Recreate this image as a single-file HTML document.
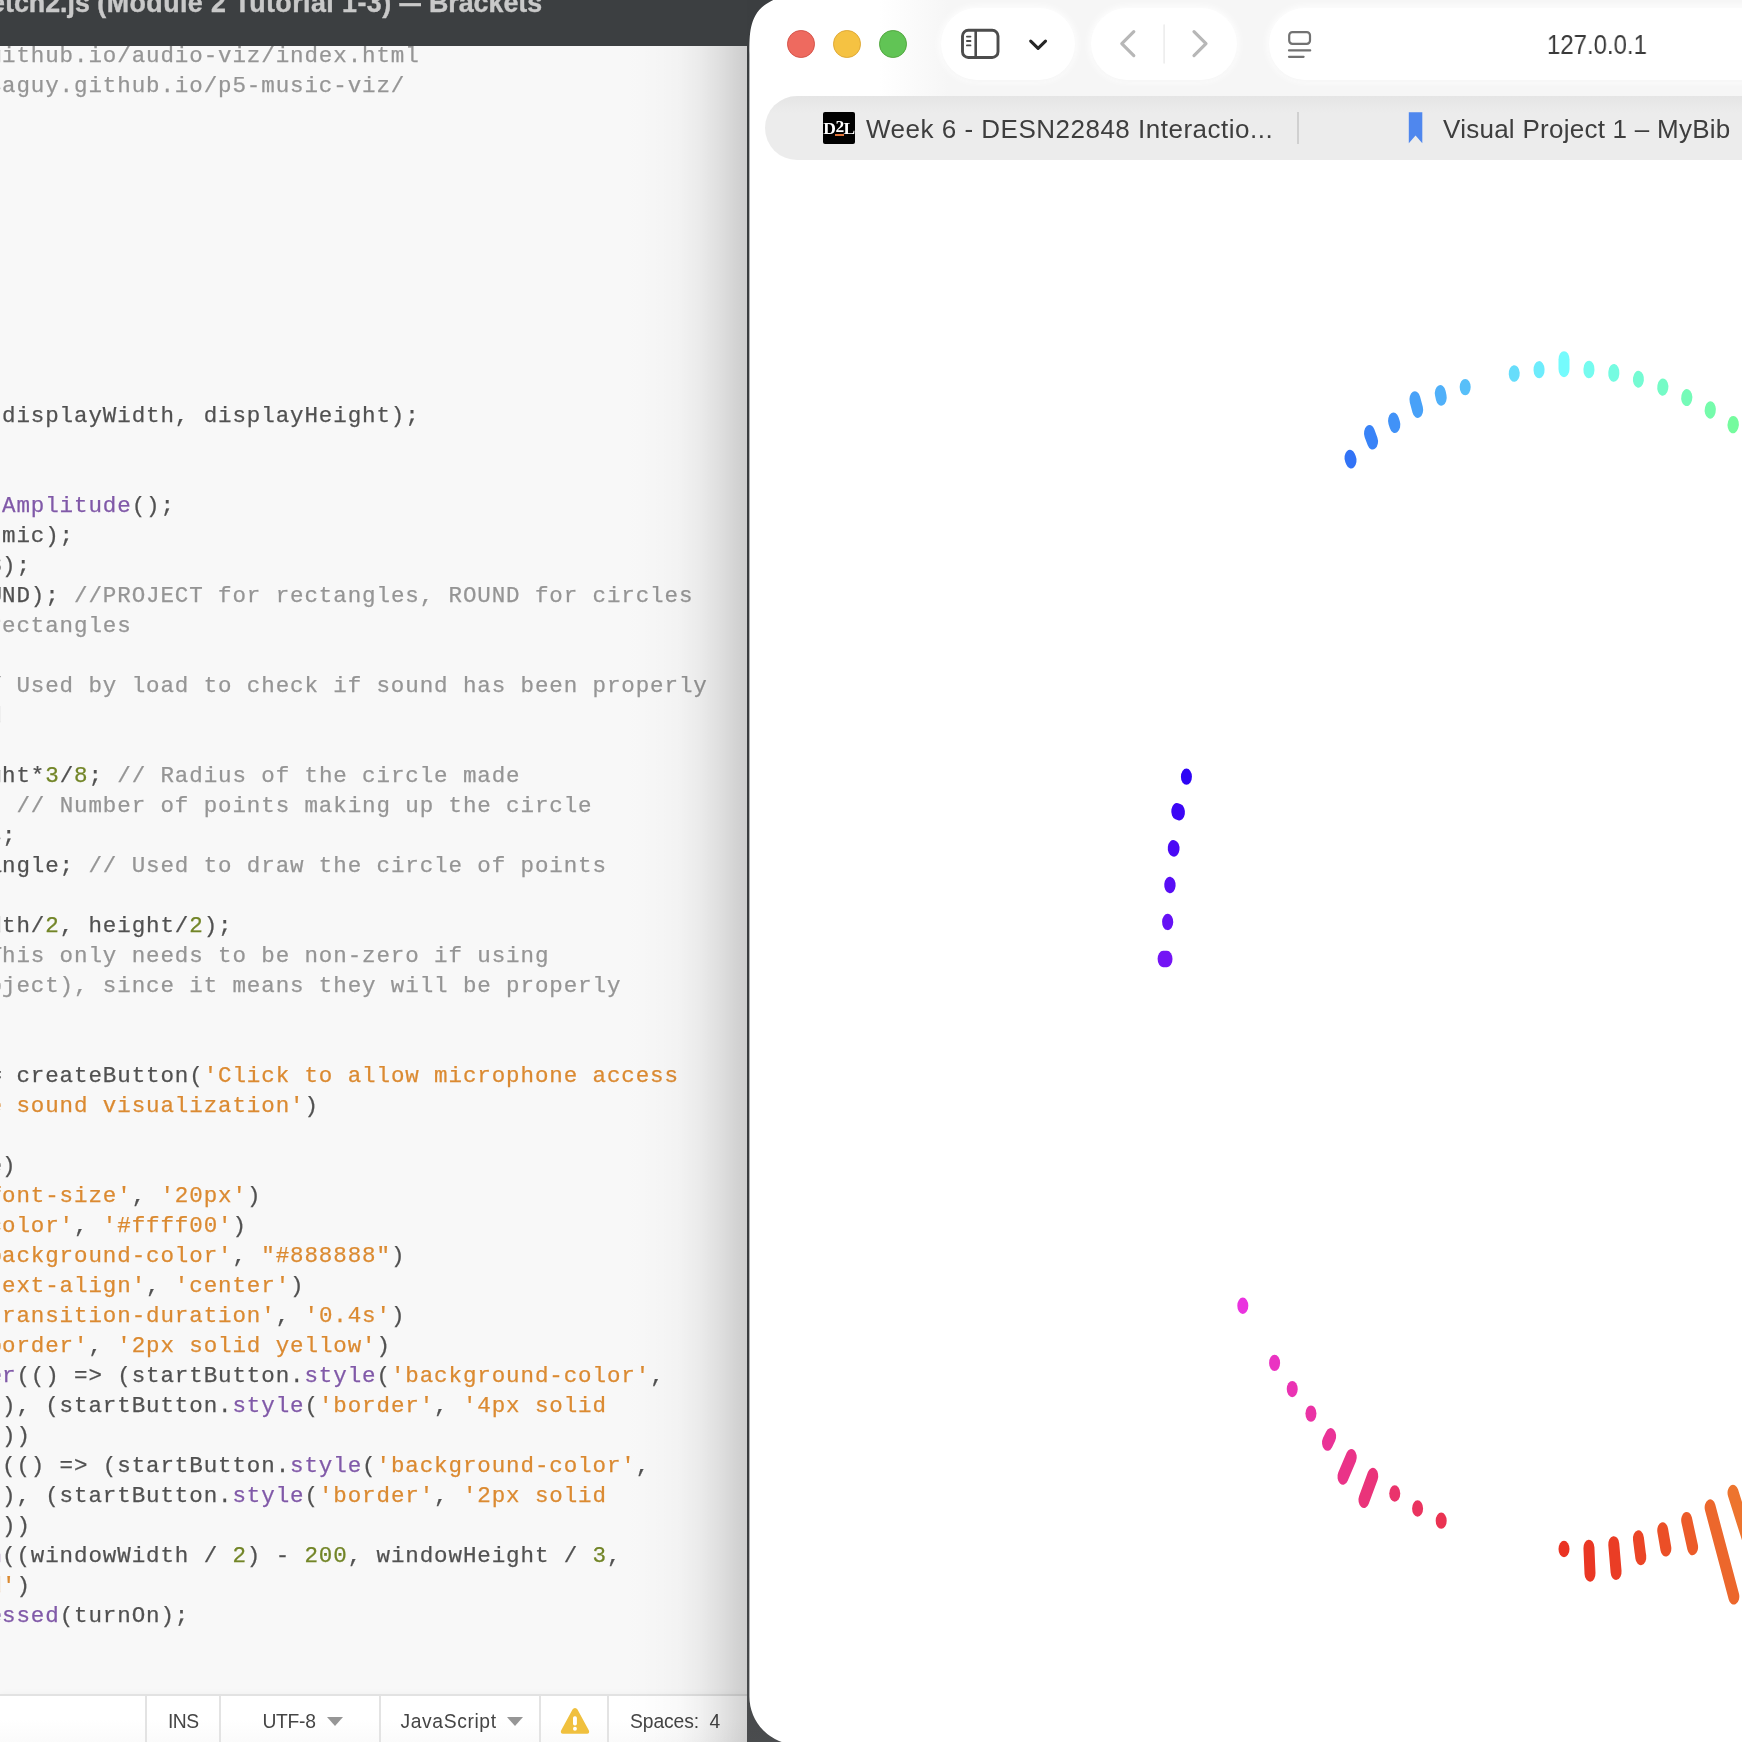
<!DOCTYPE html>
<html lang="en">
<head>
<meta charset="utf-8">
<title>sketch2.js (Module 2 Tutorial 1-3) — Brackets</title>
<style>
html,body{margin:0;padding:0}
body{width:1742px;height:1742px;overflow:hidden;position:relative;background:linear-gradient(to bottom,#3b3e40 0,#3a3c3e 1500px,#4a4c4e 1742px);
  font-family:"Liberation Sans",sans-serif}
.abs{position:absolute}
#ta{letter-spacing:0.45px}#td{display:inline-block;width:22px;overflow:hidden;vertical-align:top}
/* ---------------- Brackets window ---------------- */
#brackets{will-change:transform;position:absolute;left:0;top:0;width:747px;height:1742px;overflow:hidden;background:#f8f8f8}
#titlebar{position:absolute;left:0;top:0;width:100%;height:45.5px;background:#3c3f41}
#title{position:absolute;left:-24.8px;top:-17px;font-weight:bold;font-size:26.8px;-webkit-text-stroke:0.4px #c9c9c9;line-height:40px;color:#c9c9c9;white-space:pre;letter-spacing:0px}
#editor{position:absolute;left:0;top:45.5px;width:100%;height:1649px;background:#f8f8f8}
.ln{position:absolute;left:-12.4px;height:30px;line-height:30px;font-family:"Liberation Mono",monospace;font-size:22.5px;letter-spacing:0.9px;white-space:pre;color:#535353;-webkit-text-stroke:0.25px currentColor}
.p{position:relative;left:0.8px}
.t{color:#515151}.c{color:#959595}.s{color:#db8a31}.n{color:#728527}.d{color:#8059a8}
#status{position:absolute;left:0;top:1693.6px;width:100%;height:49px;background:linear-gradient(to bottom,#fff 0,#fff 24px,#fafafa 48px);border-top:2.2px solid #e2e2e2;box-sizing:border-box;box-shadow:0 -2px 5px rgba(0,0,0,0.025)}
.sep{position:absolute;top:0;width:2px;height:48px;background:#e3e3e3}
.st{position:absolute;top:11.3px;font-size:19.3px;line-height:30px;color:#454545;white-space:pre}
.tri{position:absolute;top:21.3px;width:0;height:0;border-left:8.3px solid transparent;border-right:8.3px solid transparent;border-top:9.8px solid #969696}
#shade{position:absolute;left:620px;top:45.5px;width:127px;height:1700px;
  background:linear-gradient(to right,rgba(0,0,0,0.000) 0.0px,rgba(0,0,0,0.004) 20.0px,rgba(0,0,0,0.012) 40.0px,rgba(0,0,0,0.024) 60.0px,rgba(0,0,0,0.056) 80.0px,rgba(0,0,0,0.100) 100.0px,rgba(0,0,0,0.145) 115.0px,rgba(0,0,0,0.178) 127.0px)}
/* ---------------- Safari window ---------------- */
#safari{position:absolute;left:749.4px;top:-8px;width:1100px;height:1760px;background:#fff;overflow:hidden;clip-path:path('M56.4 0C0.1 6.2 0 31.4 0 62L0 1704.6A48 48 0 0 0 48 1752.6L1100 1752.6L1100 0Z')}
#tbbg{position:absolute;left:130px;top:0;width:1000px;height:106px;background:linear-gradient(to right,rgba(246,246,246,0) 0,#f6f6f6 70px)}
.pill{position:absolute;top:8px;height:72px;border-radius:36px;background:#fff;box-shadow:0 1.5px 3px rgba(0,0,0,0.025),0 0 7px 2px rgba(255,255,255,0.9)}
.tl{position:absolute;top:30px;width:27.6px;height:27.6px;border-radius:50%;box-sizing:border-box}
#tabbar{position:absolute;left:765px;top:96px;width:1100px;height:64px;border-radius:32px;background:linear-gradient(to bottom,#e5e5e5 0,#ececec 17px)}
.tabtxt{will-change:transform;position:absolute;top:110.7px;font-size:26px;line-height:36px;color:#3e3e3e;white-space:pre}
#url{will-change:transform;position:absolute;left:1547.3px;top:26.6px;font-size:27px;transform:scaleX(0.888);transform-origin:0 0;line-height:36px;color:#3a3a3a;white-space:pre}
svg.viz{position:absolute;left:0;top:0}
svg.ico{position:absolute;left:0;top:0;overflow:visible}
</style>
</head>
<body>

<!-- ======================= Brackets editor (left) ======================= -->
<div id="brackets">
  <div id="editor"></div>
<div class="ln" style="top:40.6px"><span class="c p">g</span><span class="c">ithub.io/audio-viz/index.html</span></div>
<div class="ln" style="top:70.6px"><span class="c p">s</span><span class="c">aguy.github.io/p5-music-viz/</span></div>
<div class="ln" style="top:400.6px"><span class="t p">(</span><span class="t">displayWidth, displayHeight);</span></div>
<div class="ln" style="top:490.6px"><span class="t p">.</span><span class="d">Amplitude</span><span class="t">();</span></div>
<div class="ln" style="top:520.6px"><span class="t p">(</span><span class="t">mic);</span></div>
<div class="ln" style="top:550.6px"><span class="t p">8</span><span class="t">);</span></div>
<div class="ln" style="top:580.6px"><span class="t p">U</span><span class="t">ND); </span><span class="c">//PROJECT for rectangles, ROUND for circles</span></div>
<div class="ln" style="top:610.6px"><span class="c p">r</span><span class="c">ectangles</span></div>
<div class="ln" style="top:670.6px"><span class="c p">/</span><span class="c"> Used by load to check if sound has been properly</span></div>
<div class="ln" style="top:700.6px"><span class="c p">d</span></div>
<div class="ln" style="top:760.6px"><span class="t p">g</span><span class="t">ht*</span><span class="n">3</span><span class="t">/</span><span class="n">8</span><span class="t">; </span><span class="c">// Radius of the circle made</span></div>
<div class="ln" style="top:790.6px"><span class="t p">;</span><span class="t"> </span><span class="c">// Number of points making up the circle</span></div>
<div class="ln" style="top:820.6px"><span class="t p">s</span><span class="t">;</span></div>
<div class="ln" style="top:850.6px"><span class="t p">a</span><span class="t">ngle; </span><span class="c">// Used to draw the circle of points</span></div>
<div class="ln" style="top:910.6px"><span class="t p">d</span><span class="t">th/</span><span class="n">2</span><span class="t">, height/</span><span class="n">2</span><span class="t">);</span></div>
<div class="ln" style="top:940.6px"><span class="c p">T</span><span class="c">his only needs to be non-zero if using</span></div>
<div class="ln" style="top:970.6px"><span class="c p">b</span><span class="c">ject), since it means they will be properly</span></div>
<div class="ln" style="top:1060.6px"><span class="t p">=</span><span class="t"> createButton(</span><span class="s">'Click to allow microphone access</span></div>
<div class="ln" style="top:1090.6px"><span class="s p">e</span><span class="s"> sound visualization'</span><span class="t">)</span></div>
<div class="ln" style="top:1150.6px"><span class="t p">e</span><span class="t">)</span></div>
<div class="ln" style="top:1180.6px"><span class="s p">f</span><span class="s">ont-size'</span><span class="t">, </span><span class="s">'20px'</span><span class="t">)</span></div>
<div class="ln" style="top:1210.6px"><span class="s p">c</span><span class="s">olor'</span><span class="t">, </span><span class="s">'#ffff00'</span><span class="t">)</span></div>
<div class="ln" style="top:1240.6px"><span class="s p">b</span><span class="s">ackground-color'</span><span class="t">, </span><span class="s">"#888888"</span><span class="t">)</span></div>
<div class="ln" style="top:1270.6px"><span class="s p">t</span><span class="s">ext-align'</span><span class="t">, </span><span class="s">'center'</span><span class="t">)</span></div>
<div class="ln" style="top:1300.6px"><span class="s p">t</span><span class="s">ransition-duration'</span><span class="t">, </span><span class="s">'0.4s'</span><span class="t">)</span></div>
<div class="ln" style="top:1330.6px"><span class="s p">b</span><span class="s">order'</span><span class="t">, </span><span class="s">'2px solid yellow'</span><span class="t">)</span></div>
<div class="ln" style="top:1360.6px"><span class="d p">e</span><span class="d">r</span><span class="t">(() =&gt; (startButton.</span><span class="d">style</span><span class="t">(</span><span class="s">'background-color'</span><span class="t">,</span></div>
<div class="ln" style="top:1390.6px"><span class="s p">'</span><span class="t">), (startButton.</span><span class="d">style</span><span class="t">(</span><span class="s">'border'</span><span class="t">, </span><span class="s">'4px solid</span></div>
<div class="ln" style="top:1420.6px"><span class="s p">'</span><span class="t">))</span></div>
<div class="ln" style="top:1450.6px"><span class="d p">t</span><span class="t">(() =&gt; (startButton.</span><span class="d">style</span><span class="t">(</span><span class="s">'background-color'</span><span class="t">,</span></div>
<div class="ln" style="top:1480.6px"><span class="s p">'</span><span class="t">), (startButton.</span><span class="d">style</span><span class="t">(</span><span class="s">'border'</span><span class="t">, </span><span class="s">'2px solid</span></div>
<div class="ln" style="top:1510.6px"><span class="s p">'</span><span class="t">))</span></div>
<div class="ln" style="top:1540.6px"><span class="d p">n</span><span class="t">((windowWidth / </span><span class="n">2</span><span class="t">) - </span><span class="n">200</span><span class="t">, windowHeight / </span><span class="n">3</span><span class="t">,</span></div>
<div class="ln" style="top:1570.6px"><span class="s p">d</span><span class="s">'</span><span class="t">)</span></div>
<div class="ln" style="top:1600.6px"><span class="d p">e</span><span class="d">ssed</span><span class="t">(turnOn);</span></div>
  <div id="titlebar"><div id="title"><span id="t0">ketch2.js </span><span id="ta">(Module 2 Tutorial 1-3) </span><span id="td">—</span><span id="tc"> Brackets</span></div></div>
  <div id="status">
    <div class="sep" style="left:145px"></div>
    <div class="sep" style="left:219px"></div>
    <div class="sep" style="left:379px"></div>
    <div class="sep" style="left:539px"></div>
    <div class="sep" style="left:606.5px"></div>
    <div class="st" style="left:168px;letter-spacing:-0.49px">INS</div>
    <div class="st" style="left:262.4px;letter-spacing:-0.26px">UTF-8</div>
    <div class="tri" style="left:327.2px"></div>
    <div class="st" style="left:400.4px;letter-spacing:0.63px">JavaScript</div>
    <div class="tri" style="left:507.1px"></div>
    <div class="st" style="left:630px;letter-spacing:-0.09px">Spaces:  4</div>
    <svg class="abs" style="left:559px;top:10.2px" width="32" height="32" viewBox="0 0 32 32">
      <path d="M16 1.9 Q17.7 1.9 18.5 3.4 L29.9 24.6 Q31 27.6 28 27.8 L4 27.8 Q1 27.6 2.1 24.6 L13.5 3.4 Q14.3 1.9 16 1.9Z" fill="#f0c03e"/>
      <rect x="14" y="10.2" width="3.9" height="9.3" rx="1.7" fill="#fff"/>
      <circle cx="15.95" cy="22.75" r="1.95" fill="#fff"/>
    </svg>
  </div>
  <div id="shade"></div>
</div>

<!-- ======================= Safari window (right) ======================= -->
<div id="safari"><div id="tbbg"></div></div>

<div class="tl" style="left:787.1px;background:#ee6a5f;border:1px solid #d5544a"></div>
<div class="tl" style="left:833.1px;background:#f5c242;border:1px solid #dfa936"></div>
<div class="tl" style="left:879.3px;background:#61c455;border:1px solid #52a73f"></div>

<div class="pill" style="left:941px;width:134px"></div>
<div class="pill" style="left:1091px;width:146px"></div>
<div class="pill" style="left:1269px;width:600px"></div>

<svg class="ico" width="1742" height="170" viewBox="0 0 1742 170" fill="none" stroke-linecap="round" stroke-linejoin="round">
  <!-- sidebar toggle -->
  <rect x="962.5" y="30.3" width="35.5" height="27.2" rx="5.8" stroke="#4c4c4c" stroke-width="2.9"/>
  <line x1="975.7" y1="30.5" x2="975.7" y2="57" stroke="#4c4c4c" stroke-width="2.6"/>
  <path d="M966.9 36.6H970.5M966.9 41H970.5M966.9 45.4H970.5" stroke="#4c4c4c" stroke-width="1.8"/>
  <!-- chevron down -->
  <path d="M1030.7 41.1L1038.1 48.3L1045.5 41.1" stroke="#262626" stroke-width="3.1"/>
  <!-- back / forward -->
  <path d="M1133.8 31.6L1121.8 43.6L1133.8 55.6" stroke="#b7b7b7" stroke-width="3.2"/>
  <line x1="1164.1" y1="25" x2="1164.1" y2="63" stroke="#ebebeb" stroke-width="1.5"/>
  <path d="M1194 31.6L1206 43.6L1194 55.6" stroke="#b7b7b7" stroke-width="3.2"/>
  <!-- page menu icon -->
  <rect x="1289.2" y="32.2" width="20.8" height="11.6" rx="3.2" stroke="#727272" stroke-width="2.2"/>
  <path d="M1289 50.4H1310.2M1289 56.8H1303.6" stroke="#727272" stroke-width="2.2"/>
</svg>
<div id="url">127.0.0.1</div>

<div id="tabbar"></div>
<!-- D2L favicon -->
<div class="abs" style="left:823px;top:112px;width:32px;height:32px;background:#000;overflow:hidden;border-radius:2px;will-change:transform">
  <div class="abs" style="left:0;top:5.1px;width:32px;text-align:center;font-family:'Liberation Serif',serif;font-weight:bold;font-size:17.5px;line-height:22px;color:#fff;letter-spacing:-0.6px">D<span style="position:relative;top:-1.7px">2</span>L</div>
  <div class="abs" style="left:12.1px;top:21.7px;width:9px;height:2.2px;background:#e0753a"></div>
</div>
<div class="tabtxt" style="left:866px;letter-spacing:0.5px">Week 6 - DESN22848 Interactio...</div>
<div class="abs" style="left:1297.3px;top:112px;width:1.6px;height:31.5px;background:#d0d0d0"></div>
<svg class="ico" width="1742" height="170" viewBox="0 0 1742 170">
  <path d="M1408.8 112.2H1422.3V143.3L1415.55 135.6L1408.8 143.3Z" fill="#4f87ee"/>
</svg>
<div class="tabtxt" style="left:1443.2px;letter-spacing:0.26px">Visual Project 1 – MyBib</div>

<!-- ======================= p5 sketch output ======================= -->
<svg class="viz" width="1742" height="1742" viewBox="0 0 1742 1742"><g transform="translate(1564.0,959.0) scale(1,1.4861)" stroke-width="11.0" stroke-linecap="round" fill="none"><line x1="169.03" y1="359.22" x2="200.97" y2="427.08" stroke="#ed742e"/><line x1="146.15" y1="369.12" x2="169.82" y2="428.91" stroke="#ec672c"/><line x1="122.68" y1="377.57" x2="128.58" y2="395.73" stroke="#ec5b29"/><line x1="98.73" y1="384.53" x2="101.84" y2="396.63" stroke="#eb4f27"/><line x1="74.39" y1="389.97" x2="76.77" y2="402.44" stroke="#eb4526"/><line x1="49.76" y1="393.87" x2="52.09" y2="412.32" stroke="#ea3d25"/><line x1="24.93" y1="396.22" x2="26.01" y2="413.48" stroke="#ea3724"/><line x1="-0.00" y1="397.00" x2="-0.00" y2="397.01" stroke="#ea3323"/><line x1="-122.80" y1="377.95" x2="-122.81" y2="377.96" stroke="#ea3352"/><line x1="-146.40" y1="369.77" x2="-146.41" y2="369.78" stroke="#ea335f"/><line x1="-169.25" y1="359.67" x2="-169.25" y2="359.68" stroke="#ea336c"/><line x1="-191.26" y1="347.89" x2="-200.07" y2="363.93" stroke="#ea337a"/><line x1="-212.72" y1="335.20" x2="-221.03" y2="348.29" stroke="#ea3388"/><line x1="-233.35" y1="321.18" x2="-236.47" y2="325.47" stroke="#ea3397"/><line x1="-253.06" y1="305.89" x2="-253.06" y2="305.90" stroke="#ea33a5"/><line x1="-271.77" y1="289.40" x2="-271.77" y2="289.41" stroke="#ea33b3"/><line x1="-289.40" y1="271.77" x2="-289.41" y2="271.77" stroke="#ea33c2"/><line x1="-321.18" y1="233.35" x2="-321.19" y2="233.36" stroke="#ea33df"/><line x1="-397.00" y1="-0.00" x2="-400.90" y2="-0.00" stroke="#7414f5"/><line x1="-396.22" y1="-24.93" x2="-396.42" y2="-24.94" stroke="#6611f5"/><line x1="-393.87" y1="-49.76" x2="-394.27" y2="-49.81" stroke="#580df5"/><line x1="-389.97" y1="-74.39" x2="-390.75" y2="-74.54" stroke="#4a09f5"/><line x1="-384.53" y1="-98.73" x2="-387.24" y2="-99.43" stroke="#3c06f5"/><line x1="-377.57" y1="-122.68" x2="-377.58" y2="-122.68" stroke="#2e04f5"/><line x1="-212.94" y1="-335.54" x2="-214.01" y2="-337.22" stroke="#3273f6"/><line x1="-191.47" y1="-348.29" x2="-194.51" y2="-353.81" stroke="#3983f7"/><line x1="-169.14" y1="-359.44" x2="-170.46" y2="-362.25" stroke="#4192f7"/><line x1="-146.33" y1="-369.59" x2="-149.09" y2="-376.56" stroke="#48a1f8"/><line x1="-122.77" y1="-377.85" x2="-123.68" y2="-380.66" stroke="#50b0f9"/><line x1="-98.80" y1="-384.82" x2="-98.81" y2="-384.83" stroke="#57bff9"/><line x1="-49.76" y1="-393.87" x2="-49.78" y2="-394.07" stroke="#66ddfb"/><line x1="-24.93" y1="-396.22" x2="-24.97" y2="-396.82" stroke="#6decfc"/><line x1="0.00" y1="-397.00" x2="0.00" y2="-403.50" stroke="#75fbfd"/><line x1="24.93" y1="-396.22" x2="24.98" y2="-397.02" stroke="#75fbef"/><line x1="49.76" y1="-393.87" x2="49.88" y2="-394.86" stroke="#75fbe1"/><line x1="74.39" y1="-389.97" x2="74.45" y2="-390.26" stroke="#75fbd3"/><line x1="98.73" y1="-384.53" x2="98.88" y2="-385.11" stroke="#75fbc6"/><line x1="122.68" y1="-377.57" x2="122.83" y2="-378.04" stroke="#75fbb8"/><line x1="146.15" y1="-369.12" x2="146.40" y2="-369.77" stroke="#75fbab"/><line x1="169.03" y1="-359.22" x2="169.38" y2="-359.94" stroke="#75fb9e"/></g></svg>

</body>
</html>
